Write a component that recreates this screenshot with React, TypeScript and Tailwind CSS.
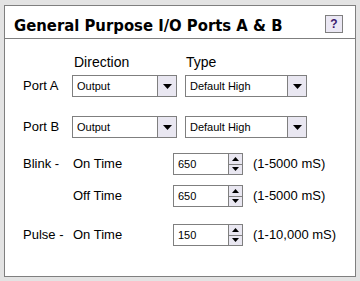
import React from "react";

const font = { fontFamily: '"Liberation Sans", Arial, sans-serif' };
const titleFont = { fontFamily: '"DejaVu Sans Condensed", "DejaVu Sans", sans-serif', fontStretch: "condensed" as const };

function Select({ value, width }: { value: string; width: string }) {
  return (
    <div className={`${width} h-[22px] border border-[#7f7f7f] bg-white flex`}>
      <div className="flex-1 flex items-center pl-[4px] text-[11px] leading-none text-black">{value}</div>
      <div className="w-[19px] h-full border-l border-[#7f7f7f] bg-[#e9e7f1] flex items-center justify-center">
        <svg width="9" height="5" viewBox="0 0 9 5">
          <polygon points="0,0 9,0 4.5,5" fill="#000" />
        </svg>
      </div>
    </div>
  );
}

function Spin({ value }: { value: string }) {
  return (
    <div className="flex h-[22px]">
      <div className="w-[56px] h-full border border-[#7f7f7f] bg-white flex items-center pl-[4px] text-[11px] leading-none text-black">
        {value}
      </div>
      <div className="w-[14px] h-full border border-l-0 border-[#7f7f7f] bg-[#e9e7f1] flex flex-col">
        <div className="flex-1 flex items-center justify-center border-b border-[#7f7f7f]">
          <svg width="7" height="4" viewBox="0 0 7 4">
            <polygon points="0,4 7,4 3.5,0" fill="#000" />
          </svg>
        </div>
        <div className="flex-1 flex items-center justify-center">
          <svg width="7" height="4" viewBox="0 0 7 4">
            <polygon points="0,0 7,0 3.5,4" fill="#000" />
          </svg>
        </div>
      </div>
    </div>
  );
}

export default function App() {
  return (
    <div className="w-[360px] h-[281px] bg-[#e3e3e3] pt-[5px] pl-[4px]" style={font}>
      <div className="w-[352px] h-[272px] bg-white border border-[#7f7f7f] flex flex-col">
        <div className="h-[33px] border-b border-[#7f7f7f] flex items-start justify-between pl-[9px] pr-[12px] shrink-0">
          <div className="pt-[9px] text-[16.5px] leading-[21px] font-bold text-black" style={titleFont}>
            General Purpose I/O Ports A &amp; B
          </div>
          <div className="mt-[9px] w-[18px] h-[18px] border border-[#7f7f7f] bg-[#ebe8f4] flex items-center justify-center text-[12px] font-bold text-[#3b1a6e] leading-none">
            ?
          </div>
        </div>
        <div className="pl-[18px] pt-[15px] text-[13px] text-black">
          <div className="flex h-[16px] leading-[16px] text-[14px]">
            <div className="w-[51px]" />
            <div className="w-[112px]">Direction</div>
            <div>Type</div>
          </div>
          <div className="flex items-center mt-[5px]">
            <div className="w-[49px]">Port A</div>
            <Select value="Output" width="w-[105px]" />
            <div className="w-[8px]" />
            <Select value="Default High" width="w-[122px]" />
          </div>
          <div className="flex items-center mt-[19px]">
            <div className="w-[49px]">Port B</div>
            <Select value="Output" width="w-[105px]" />
            <div className="w-[8px]" />
            <Select value="Default High" width="w-[122px]" />
          </div>
          <div className="flex items-center mt-[15px]">
            <div className="w-[50px]">Blink -</div>
            <div className="w-[100px]">On Time</div>
            <Spin value="650" />
            <div className="ml-[10px]">(1-5000 mS)</div>
          </div>
          <div className="flex items-center mt-[10px]">
            <div className="w-[50px]" />
            <div className="w-[100px]">Off Time</div>
            <Spin value="650" />
            <div className="ml-[10px]">(1-5000 mS)</div>
          </div>
          <div className="flex items-center mt-[17px]">
            <div className="w-[50px]">Pulse -</div>
            <div className="w-[100px]">On Time</div>
            <Spin value="150" />
            <div className="ml-[10px]">(1-10,000 mS)</div>
          </div>
        </div>
      </div>
    </div>
  );
}
